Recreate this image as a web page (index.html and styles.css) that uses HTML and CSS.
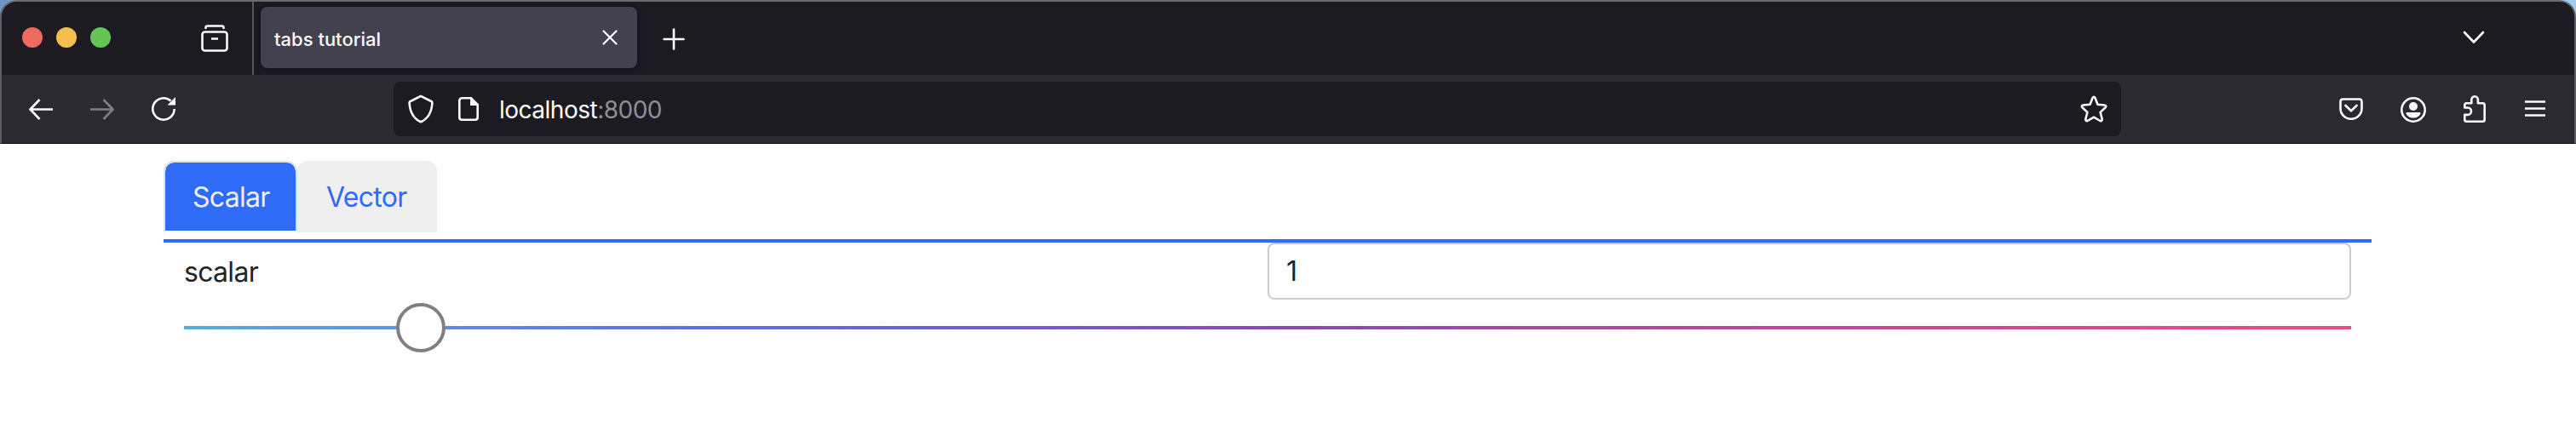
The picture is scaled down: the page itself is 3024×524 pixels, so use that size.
FILE: index.html
```html
<!DOCTYPE html>
<html lang="en">
<head>
<meta charset="utf-8">
<title>tabs tutorial</title>
<link rel="stylesheet" href="styles.css">
</head>
<body>
<div class="desktop">
<header class="chrome">
  <div class="tabbar">
    <div class="lights"><i class="light red"></i><i class="light yellow"></i><i class="light green"></i></div>
    <svg class="icon archive" width="32" height="32" viewBox="0 0 32 32"><path d="M5.500 4V3.500Q5.500 1.500 7.500 1.500H24.500Q26.500 1.500 26.500 3.500V4"/><rect x="1.500" y="8.500" width="29" height="22" rx="3"/><path d="M12 16.500h8" stroke-linecap="butt"/></svg>
    <div class="separator"></div>
    <div class="browser-tab">
      <span class="tab-title">tabs tutorial</span>
      <svg class="icon thin" width="18" height="18" viewBox="0 0 18 18"><path d="M1.500 1.500l15 15M16.500 1.500l-15 15"/></svg>
    </div>
    <svg class="icon plus" width="26" height="26" viewBox="0 0 26 26"><path d="M13 1.500v23M1.500 13h23"/></svg>
    <svg class="icon chevron" width="26" height="16" viewBox="0 0 26 16"><path d="M2 2l11 11.500L24 2"/></svg>
  </div>
  <div class="toolbar">
    <div class="nav">
      <svg class="icon" width="28" height="26" viewBox="0 0 28 26"><path d="M28 13.500H2M12.500 2L1.500 13.500 12.500 25" stroke-linecap="butt"/></svg>
      <svg class="icon dim" width="28" height="26" viewBox="0 0 28 26"><path d="M0 13.500H26M15.500 2L26.500 13.500 15.500 25" stroke-linecap="butt"/></svg>
      <svg class="icon" width="30" height="30" viewBox="0 0 30 30"><path d="M22.500 5.500A12.700 12.700 0 1 0 26.700 15" stroke-linecap="butt"/><path class="solid" d="M28 1v9.500h-9.500z"/></svg>
    </div>
    <div class="urlbar">
      <svg class="icon shield" width="30" height="34" viewBox="0 0 30 34"><path d="M15 1.800L27.200 8Q28.500 8.700 28.400 10C27.800 20 24.500 28 15 32.200 5.500 28 2.200 20 1.600 10Q1.500 8.700 2.800 8z"/></svg>
      <svg class="icon" width="24" height="28" viewBox="0 0 24 28"><path d="M15 1.300H4.300Q1.300 1.300 1.300 4.300V23.700Q1.300 26.700 4.300 26.700H19.700Q22.700 26.700 22.700 23.700V9"/><path class="solid" d="M14 0h1.500L24 8.500V10H14z"/></svg>
      <span class="address">localhost<span class="port">:8000</span></span>
      <svg class="icon star" width="32" height="32" viewBox="0 0 32 32"><path d="M14.600 2.800Q16 .8 17.400 2.800L20.500 10.700 28.500 11.500Q31.200 12.200 29.600 14.300L23.600 19.900 25.700 28Q25.700 30.700 23.400 30L16 25.700 8.600 30Q6.300 30.700 6.300 28L8.400 19.900 2.400 14.300Q.8 12.200 3.500 11.500L11.500 10.700z"/></svg>
    </div>
    <div class="actions">
      <svg class="icon" width="28" height="26" viewBox="0 0 28 26"><path d="M4.500 1.500h19q3 0 3 3v8a12.500 12.200 0 0 1-25 0v-8q0-3 3-3z"/><path d="M7.500 9l6.500 6.300L20.500 9"/></svg>
      <svg class="icon account" width="30" height="30" viewBox="0 0 30 30"><circle cx="15" cy="15" r="13.700"/><circle class="solid" cx="15" cy="11" r="5"/><path class="solid" d="M7.500 18h15q1.200 0 1 1.200C22 23 18.800 24.500 15 24.500S8 23 6.500 19.200Q6.300 18 7.500 18z"/></svg>
      <svg class="icon puzzle" width="26" height="32" viewBox="0 0 26 32"><path d="M1.300 14.500V11.500Q1.300 9.300 3.500 9.300H9.300V5.300a3.800 4 0 0 1 7.600 0V9.300H22.500Q24.700 9.300 24.700 11.500V28.500Q24.700 30.700 22.500 30.700H3.500Q1.300 30.700 1.300 28.500V22.900H4.800a4.200 4.200 0 0 0 0-8.400z"/></svg>
      <svg class="icon" width="24" height="20" viewBox="0 0 24 20"><path d="M.5 1.500h23M.5 9.500h23M.5 17.500h23"/></svg>
    </div>
  </div>
</header>
</div>
<main class="page">
  <nav class="tabs">
    <a class="tab active">Scalar</a>
    <a class="tab">Vector</a>
  </nav>
  <section class="panel">
    <div class="row">
      <label class="label">scalar</label>
      <div class="field">1</div>
    </div>
    <div class="slider"><div class="thumb"></div></div>
  </section>
</main>
</body>
</html>
```
FILE: styles.css
```css
* { box-sizing: border-box; }
body { margin: 0; min-height: 524px; background: #fff; font-family: Inter, "Liberation Sans", sans-serif; }
.desktop { background: linear-gradient(90deg, #6e93c4, #a3c9ec); }
.chrome {
  height: 169px;
  border: 2px solid #5f5f63;
  border-top-color: #6b6b6c;
  border-bottom: 1px solid #0a090c;
  border-radius: 20px 20px 0 0;
  background: #2b2a33;
  overflow: hidden;
}
.icon { display: block; flex: none; fill: none; stroke: #fbfbfe; stroke-width: 2.6; stroke-linecap: round; stroke-linejoin: round; }
.icon .solid { fill: #fbfbfe; stroke: none; }
.thin { stroke-width: 2.2; }
.dim { opacity: .4; }
.tabbar { height: 86px; display: flex; align-items: center; background: #1c1b22; }
.lights { display: flex; gap: 16px; margin-left: 24px; margin-bottom: 2px; }
.light { width: 24px; height: 24px; border-radius: 50%; }
.red { background: #ed6a5e; }
.yellow { background: #f5bf4f; }
.green { background: #62c554; }
.archive { margin-left: 106px; margin-bottom: 1px; }
.separator { width: 2px; height: 86px; margin-left: 28px; background: #58575d; }
.browser-tab {
  width: 442px; height: 72px; margin: 0 30px 2px 8px; padding: 0 23px 0 16px;
  display: flex; align-items: center; justify-content: space-between;
  border-radius: 8px; background: #42414d; box-shadow: 0 0 8px rgba(0, 0, 0, .5);
}
.tab-title { color: #fbfbfe; font-size: 22px; font-weight: 500; line-height: 28px; letter-spacing: 0; margin-top: 4px; }
.plus { margin-top: 1px; }
.chevron { margin: 0 105px 2px auto; }
.toolbar { height: 80px; display: flex; align-items: center; }
.nav { width: 460px; padding-left: 32px; display: flex; align-items: center; gap: 44px; }
.urlbar { width: 2028px; height: 64px; padding: 0 16px 0 17px; display: flex; align-items: center; border-radius: 8px; background: #1c1b22; }
.shield { margin-right: 29px; }
.address { margin: 2px 0 0 24px; color: #fbfbfe; font-size: 28px; line-height: 36px; letter-spacing: -.5px; }
.port { color: #8f8f94; }
.star { margin-left: auto; }
.actions { margin: 0 34px 0 auto; display: flex; align-items: center; }
.account { margin: 2px 44px 0; }
.puzzle { margin-right: 46px; }
.page { padding: 20px 240px 0 192px; color: #212529; font-size: 32px; line-height: 48px; }
.tabs { height: 96px; display: flex; align-items: flex-start; border-bottom: 4px solid #2e6bf6; }
.tab {
  height: 84px; padding: 17px 32px 15px; border: 2px solid #efefef; border-radius: 12px 12px 0 0;
  background: #efefef; color: #2e6bf6; letter-spacing: -.7px;
}
.tab:not(.active) { width: 164px; }
.active { width: 157px; border-color: #dee2e6 #dee2e6 #fff; background: #2e6bf6; background-clip: padding-box; color: #efefef; }
.panel { padding: 0 24px; }
.row { height: 67px; display: flex; align-items: center; }
.label { width: 1272px; margin-top: 2px; letter-spacing: -.7px; }
.field { width: 1272px; height: 67px; padding: 8px 20px; border: 2px solid #ccc; border-radius: 8px; }
.slider { height: 4px; margin-top: 31px; display: flex; align-items: center; background: linear-gradient(90deg, #5aaadd, #5b70e4 25%, #8e48b2 51%, #ee4b80); }
.thumb { width: 58px; height: 58px; flex: none; margin-left: 249px; border: 4px solid #808080; border-radius: 50%; background: #fff; }
```
